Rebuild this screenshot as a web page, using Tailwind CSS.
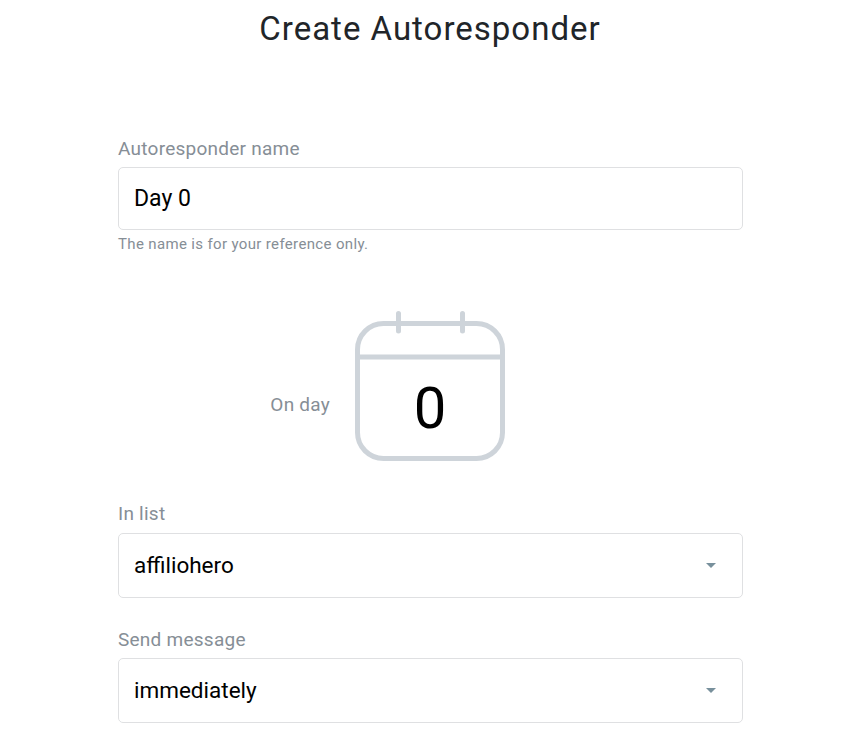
<!DOCTYPE html>
<html lang="en">
<head>
	<meta charset="UTF-8">
	<meta name="viewport" content="width=device-width, initial-scale=1.0">
	<title>Create Autoresponder</title>
	<script src="https://cdn.jsdelivr.net/npm/@tailwindcss/browser@4"></script>
</head>
<body class="h-screen overflow-hidden bg-white font-['Roboto',sans-serif]">

<h1 class="pt-[9px] pl-px text-center text-[33px] leading-10 tracking-[1px] text-[#212529]">Create Autoresponder</h1>

<form class="mt-[88px] ml-[118px] w-[625px]">
	<label class="block h-[30px] text-[19px] leading-6 tracking-[0.25px] text-[#868e96]">Autoresponder name</label>
	<div class="flex h-[63px] items-center rounded-[5px] border border-[#dfe0e2] px-[15px] pt-px text-[23px] text-black">Day 0</div>
	<p class="mt-1 text-[15px] leading-5 tracking-[0.35px] text-[#868e96]">The name is for your reference only.</p>

	<div class="mt-[57px] flex h-[150px]">
		<span class="w-[237px] pt-[82px] pr-[25px] text-right text-[19px] leading-6 tracking-[0.25px] text-[#868e96]">On day</span>
		<div class="relative h-[150px] w-[150px]">
			<svg class="h-full w-full" viewBox="0 0 150 150" fill="none" stroke="#ced4da" stroke-width="5">
				<rect x="2.5" y="12.5" width="145" height="135" rx="26"/>
				<path d="M2.5 46H147.5"/>
				<path d="M43.5 2.5V20M107.5 2.5V20" stroke-linecap="round"/>
			</svg>
			<span class="absolute inset-x-0 top-[61px] text-center text-[58px] leading-[72px] text-black">0</span>
		</div>
	</div>

	<label class="mt-[41px] block h-[31px] text-[19px] leading-6 tracking-[0.25px] text-[#868e96]">In list</label>
	<div class="flex h-[65px] items-center justify-between rounded-[5px] border border-[#dfe0e2] pr-[26px] pl-[15px] text-[22.5px] text-black">
		<span class="pt-px">affiliohero</span>
		<svg class="h-[5px] w-[10px]" viewBox="0 0 10 5" fill="#78909c"><path d="M0 0H10L5 5Z"/></svg>
	</div>

	<label class="mt-[30px] block h-[30px] text-[19px] leading-6 tracking-[0.25px] text-[#868e96]">Send message</label>
	<div class="flex h-[65px] items-center justify-between rounded-[5px] border border-[#dfe0e2] pr-[26px] pl-[15px] text-[22.5px] text-black">
		<span class="pt-px">immediately</span>
		<svg class="h-[5px] w-[10px]" viewBox="0 0 10 5" fill="#78909c"><path d="M0 0H10L5 5Z"/></svg>
	</div>
</form>

</body>
</html>
